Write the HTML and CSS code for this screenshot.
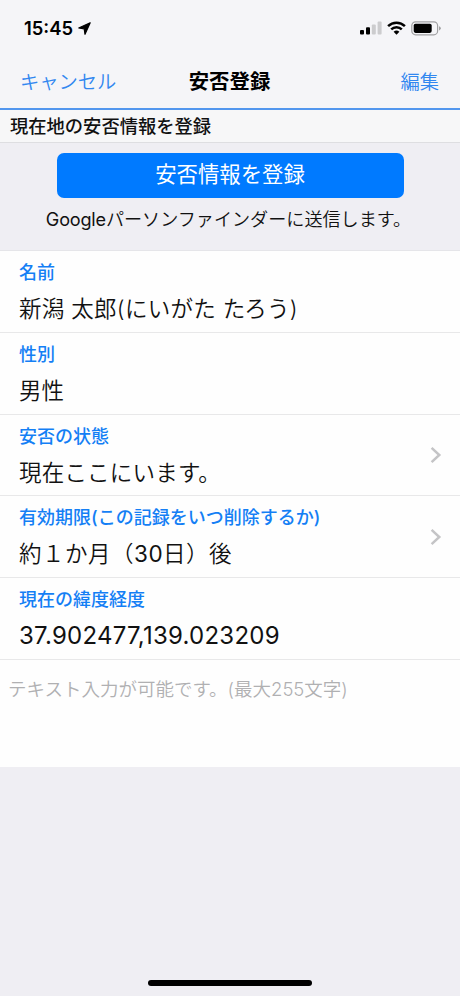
FILE: index.html
```html
<!DOCTYPE html>
<html lang="ja">
<head>
<meta charset="utf-8">
<meta name="viewport" content="width=device-width, initial-scale=1">
<title>安否登録</title>
<link rel="stylesheet" href="styles.css">
</head>
<body>
<div class="screen">
  <header class="header">
    <div class="status">
      <div class="clock"><span class="time">15:45</span>
        <svg class="locate" width="13" height="13" viewBox="0 0 13 13"><path d="M12.2.8 7 12.3 6.2 6.8.7 6Z" fill="#000" stroke="#000" stroke-width="1.2" stroke-linejoin="round"/></svg>
      </div>
      <div class="indicators">
        <svg width="22" height="14" viewBox="0 0 22 14"><rect x="0" y="9" width="4" height="4.4" rx="1"/><rect x="6" y="6.3" width="4" height="7.1" rx="1"/><rect x="11.8" y="3.6" width="4" height="9.8" rx="1" fill="#ccccce"/><rect x="17.6" y=".6" width="4" height="12.8" rx="1" fill="#ccccce"/></svg>
        <svg class="wifi" width="19" height="14" viewBox="0 0 19 14"><g fill="none" stroke="#000" stroke-width="2.5"><path d="M1.1 5.2a12 12 0 0 1 16.8 0"/><path d="M4.2 8.4a7.6 7.6 0 0 1 10.6 0"/></g><path d="M6.6 10.8a4.2 4.2 0 0 1 5.8 0L9.5 13.7Z"/></svg>
        <svg class="battery" width="31" height="15" viewBox="0 0 31 15"><rect x=".8" y=".8" width="25.8" height="13" rx="3.8" fill="none" stroke="#a0a0a2" stroke-width="1.2"/><rect x="2.7" y="2.7" width="18" height="9.2" rx="1.8"/><path d="M28 5.2q1.8.5 1.8 2.1T28 9.4Z" fill="#a0a0a2"/></svg>
      </div>
    </div>
    <nav class="nav">
      <span class="nav-link cancel">キャンセル</span>
      <h1 class="nav-title">安否登録</h1>
      <span class="nav-link edit">編集</span>
    </nav>
  </header>
  <h2 class="section-title">現在地の安否情報を登録</h2>
  <section class="submit">
    <button class="submit-button" type="button">安否情報を登録</button>
    <p class="submit-note"><span class="latin">Google</span>パーソンファインダーに送信します。</p>
  </section>
  <main class="form">
    <div class="row"><div class="field"><div class="label">名前</div><div class="value name">新潟 太郎(にいがた たろう)</div></div></div>
    <div class="row"><div class="field"><div class="label">性別</div><div class="value">男性</div></div></div>
    <div class="row"><div class="field"><div class="label">安否の状態</div><div class="value state">現在ここにいます。</div></div>
      <svg class="chevron" width="12" height="18" viewBox="0 0 12 18"><path d="m1.6 1.8 7.7 7.2-7.7 7.2"/></svg></div>
    <div class="row"><div class="field"><div class="label expiry-label">有効期限(この記録をいつ削除するか)</div><div class="value expiry">約１か月（<span class="latin">30</span>日）後</div></div>
      <svg class="chevron" width="12" height="18" viewBox="0 0 12 18"><path d="m1.6 1.8 7.7 7.2-7.7 7.2"/></svg></div>
    <div class="row"><div class="field"><div class="label">現在の緯度経度</div><div class="value coords">37.902477,139.023209</div></div></div>
    <div class="memo"><span class="placeholder">テキスト入力が可能です。(最大255文字)</span></div>
  </main>
  <footer class="footer"><div class="home-indicator"></div></footer>
</div>
</body>
</html>
```
FILE: styles.css
```css
* { box-sizing: border-box; }
body {
  margin: 0;
  background: #efeef3;
  color: #111;
  font-family: Inter, "Noto Sans CJK JP", sans-serif;
}
h1, h2, p { margin: 0; }
svg { display: block; }
.screen { width: 460px; height: 996px; display: flex; flex-direction: column; overflow: hidden; white-space: nowrap; }
.header { height: 110px; flex: none; background: #f5f5f8; border-bottom: 2px solid #5296ee; }
.status { height: 56px; padding: 0 18px 0 24px; display: flex; justify-content: space-between; align-items: center; }
.clock { display: flex; align-items: center; gap: 5px; color: #000; }
.time { font-size: 18.4px; font-weight: 600; line-height: 24px; }
.indicators { display: flex; align-items: center; gap: 5px; }
.nav { height: 52px; padding: 0 21px 0 20px; display: grid; grid-template-columns: 1fr auto 1fr; align-items: center; line-height: 30px; }
.nav-link { color: #3187f0; font-size: 19.3px; font-weight: 350; }
.edit { justify-self: end; }
.nav-title { font-size: 20.4px; font-weight: 700; color: #000; }
.section-title { height: 33px; flex: none; padding-left: 10px; background: #f7f7f8; border-bottom: 1px solid #dedee1; font-size: 18.3px; font-weight: 500; line-height: 32px; }
.submit { height: 108px; flex: none; padding-top: 10px; display: flex; flex-direction: column; align-items: center; border-bottom: 1px solid #e5e5e9; }
.submit-button { width: 347px; height: 45px; padding: 0 0 2px; border: 0; border-radius: 7px; background: #007aff; color: #fff; font: 400 21.4px/41px Inter, "Noto Sans CJK JP", sans-serif; }
.submit-note { padding: 6px 3px 0 0; font-size: 18.1px; font-weight: 350; line-height: 30px; }
.submit-note .latin { font-weight: 400; letter-spacing: -.2px; }
.form { flex: none; background: #fefefe; }
.row { height: 81.8px; padding: 0 18px 0 19px; display: flex; align-items: center; justify-content: space-between; border-bottom: 1px solid #e8e8e9; }
.field { align-self: flex-start; padding-top: 9px; }
.label { color: #147ff5; font-size: 18px; font-weight: 500; line-height: 26px; }
.value { padding-top: 5px; font-size: 22.5px; font-weight: 350; line-height: 36px; }
.name { letter-spacing: .3px; }
.state { letter-spacing: .2px; }
.expiry { letter-spacing: .5px; }
.value .latin, .coords { font-weight: 400; }
.coords { font-size: 24px; letter-spacing: .25px; }
.chevron { fill: none; stroke: #c4c4c6; stroke-width: 2.5; }
.memo { height: 107px; padding: 15px 8px; }
.placeholder { display: inline-block; color: #b0b0b2; font-size: 18.5px; font-weight: 350; line-height: 28px; }
.footer { flex: 1; display: flex; align-items: flex-end; justify-content: center; padding-bottom: 10px; }
.home-indicator { width: 164px; height: 6px; border-radius: 3px; background: #000; }
```
